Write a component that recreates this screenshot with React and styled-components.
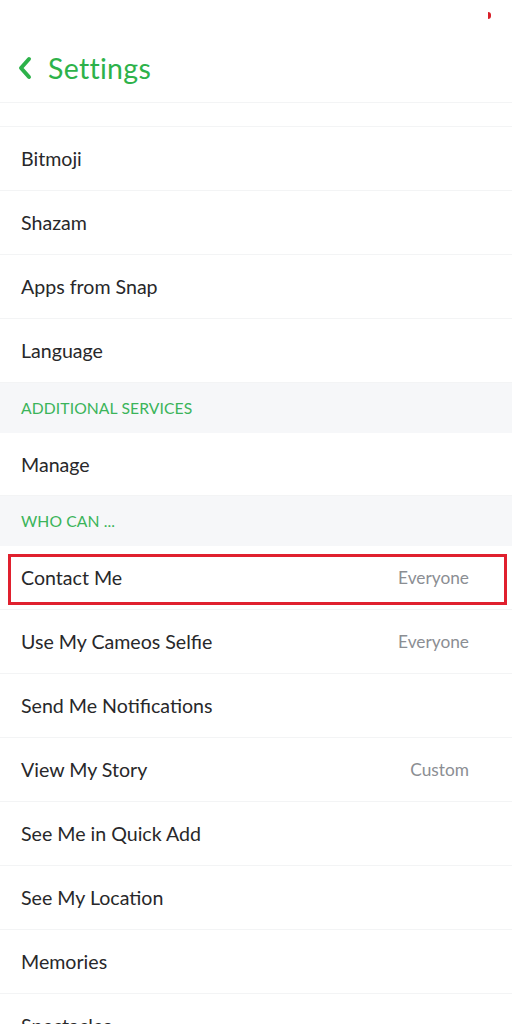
import React from 'react';
import styled, { createGlobalStyle } from 'styled-components';

const GlobalStyle = createGlobalStyle`
  html, body {
    margin: 0;
    padding: 0;
    background: #ffffff;
  }
  body {
    font-family: Lato, "Noto Sans", sans-serif;
    -webkit-font-smoothing: antialiased;
  }
`;

const Screen = styled.div`
  width: 512px;
  height: 1024px;
  overflow: hidden;
  background: #ffffff;
  position: relative;
`;

const StatusDot = styled.span`
  position: absolute;
  top: 12px;
  left: 488px;
  width: 3px;
  height: 7px;
  border-radius: 0 4px 4px 0;
  background: #d8202a;
`;

const Header = styled.header`
  height: 102px;
  display: flex;
  align-items: center;
  padding: 34px 0 0 17px;
  box-sizing: border-box;
  gap: 15px;
  color: #2db24a;
`;

const Title = styled.h1`
  margin: 0;
  font-size: 28.5px;
  font-weight: 400;
  letter-spacing: 0.3px;
  color: #2db24a;
`;

const Spacer = styled.div`
  height: 23px;
  border-top: 1px solid #f3f4f5;
  border-bottom: 1px solid #f3f4f5;
`;

const Row = styled.div`
  position: relative;
  height: ${p => p.$h || 64}px;
  display: flex;
  align-items: center;
  justify-content: space-between;
  padding: 0 43px 0 21px;
  border-bottom: 1px solid #f3f4f5;
  box-sizing: border-box;
`;

const Label = styled.span`
  font-size: 19.6px;
  color: #28282a;
`;

const Value = styled.span`
  font-size: 17.3px;
  color: #8b8e93;
`;

const Section = styled.div`
  height: 50px;
  display: flex;
  align-items: center;
  padding-left: 21px;
  background: #f6f7f9;
  font-size: 15.7px;
  color: #3bb45a;
  letter-spacing: 0.1px;
`;

const Highlight = styled.div`
  position: absolute;
  top: 8px;
  left: 8px;
  right: 5px;
  bottom: 4px;
  border: 3px solid #e0202e;
  pointer-events: none;
`;

const Chevron = () => (
  <svg width="16" height="24" viewBox="0 0 16 24">
    <path d="M12 3 L4 12 L12 21" fill="none" stroke="#2db24a" strokeWidth="4" strokeLinecap="round" strokeLinejoin="round" />
  </svg>
);

const topItems = ['Bitmoji', 'Shazam', 'Apps from Snap', 'Language'];

const whoItems = [
  { label: 'Contact Me', value: 'Everyone', marked: true },
  { label: 'Use My Cameos Selfie', value: 'Everyone' },
  { label: 'Send Me Notifications' },
  { label: 'View My Story', value: 'Custom' },
  { label: 'See Me in Quick Add' },
  { label: 'See My Location' },
  { label: 'Memories' },
  { label: 'Spectacles' },
];

export default function App() {
  return (
    <Screen>
      <GlobalStyle />
      <StatusDot />
      <Header>
        <Chevron />
        <Title>Settings</Title>
      </Header>
      <Spacer />
      {topItems.map(t => (
        <Row key={t}>
          <Label>{t}</Label>
        </Row>
      ))}
      <Section>ADDITIONAL SERVICES</Section>
      <Row $h={63}>
        <Label>Manage</Label>
      </Row>
      <Section>WHO CAN ...</Section>
      {whoItems.map(it => (
        <Row key={it.label}>
          <Label>{it.label}</Label>
          {it.value && <Value>{it.value}</Value>}
          {it.marked && <Highlight />}
        </Row>
      ))}
    </Screen>
  );
}
